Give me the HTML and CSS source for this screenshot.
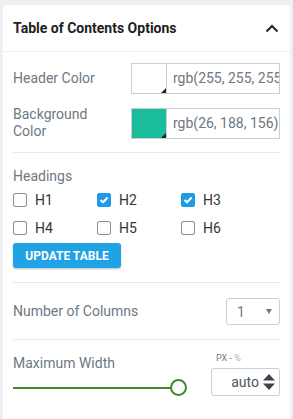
FILE: index.html
```html
<!DOCTYPE html>
<html>
<head>
<meta charset="utf-8">
<link rel="stylesheet" href="styles.css">
</head>
<body>
<div class="card">
  <div class="card-header">
    <span class="title">Table of Contents Options</span>
    <svg class="chevron" width="14" height="9" viewBox="0 0 14 9"><path d="M1.5 7.5 L7 2 L12.5 7.5" fill="none" stroke="#222" stroke-width="2"/></svg>
  </div>
  <div class="card-body">
    <div class="color-row">
      <div class="label">Header Color</div>
      <div class="color-input">
        <div class="swatch swatch-white"><span class="corner"></span></div>
        <div class="color-text"><div class="clip">rgb(255, 255, 255)</div></div>
      </div>
    </div>
    <div class="color-row">
      <div class="label">Background Color</div>
      <div class="color-input">
        <div class="swatch swatch-green"><span class="corner"></span></div>
        <div class="color-text"><div class="clip">rgb(26, 188, 156)</div></div>
      </div>
    </div>
    <hr class="divider">
    <div class="label headings-label">Headings</div>
    <div class="checks">
      <label class="check"><span class="box"></span>H1</label>
      <label class="check"><span class="box on"><svg width="10" height="8" viewBox="0 0 10 8"><path d="M1.5 4 L4 6.3 L8.6 1.5" fill="none" stroke="#fff" stroke-width="2"/></svg></span>H2</label>
      <label class="check"><span class="box on"><svg width="10" height="8" viewBox="0 0 10 8"><path d="M1.5 4 L4 6.3 L8.6 1.5" fill="none" stroke="#fff" stroke-width="2"/></svg></span>H3</label>
      <label class="check"><span class="box"></span>H4</label>
      <label class="check"><span class="box"></span>H5</label>
      <label class="check"><span class="box"></span>H6</label>
    </div>
    <button class="btn">UPDATE TABLE</button>
    <hr class="divider divider-2">
    <div class="select-row">
      <div class="label">Number of Columns</div>
      <div class="select"><span>1</span><span class="caret"></span></div>
    </div>
    <hr class="divider divider-3">
    <div class="width-row">
      <div class="width-left">
        <div class="label">Maximum Width</div>
        <div class="slider"><span class="track"></span><span class="thumb"></span></div>
      </div>
      <div class="width-right">
        <div class="units">PX <span class="dash">-</span> <span class="pct">%</span></div>
        <div class="number"><span>auto</span>
          <svg width="14" height="18" viewBox="0 0 14 18"><path d="M7 1 L13 7.5 L1 7.5 Z M7 17 L13 10.5 L1 10.5 Z" fill="#3c434a"/></svg>
        </div>
      </div>
    </div>
  </div>
</div>
</body>
</html>
```
FILE: styles.css
```css
* { box-sizing: border-box; }
html, body { margin: 0; padding: 0; }
body {
  background: #eef1f3;
  font-family: Roboto, "Liberation Sans", sans-serif;
  width: 293px;
  height: 419px;
  overflow: hidden;
}
.card {
  margin: 5px 3px 0 3px;
  background: #fff;
  border-radius: 4px 4px 0 0;
  height: 414px;
}
.card-header {
  height: 47px;
  display: flex;
  align-items: center;
  justify-content: space-between;
  padding: 0 11px 1px 10px;
  border-bottom: 1px solid #eceff1;
}
.title {
  font-size: 14px;
  font-weight: 700;
  color: #1e1e1e;
}
.chevron { margin-top: 1px; }
.card-body { padding: 11px 10px 0 10px; }
.label {
  font-size: 14px;
  color: #6d7882;
  line-height: 17px;
}
.color-row {
  display: flex;
  align-items: center;
  margin-bottom: 12px;
}
.color-row .label {
  width: 118px;
  flex-shrink: 0;
  padding-right: 22px;
}
.color-input {
  display: flex;
  flex: 1;
  min-width: 0;
  height: 31px;
}
.swatch {
  width: 36px;
  flex-shrink: 0;
  height: 31px;
  border: 1px solid #c9cfd4;
  position: relative;
}
.swatch-green { background: #1abc9c; }
.corner {
  position: absolute;
  right: 0;
  bottom: 0;
  width: 0;
  height: 0;
  border-left: 5px solid transparent;
  border-bottom: 5px solid #222;
}
.color-text {
  flex: 1;
  min-width: 0;
  border: 1px solid #c9cfd4;
  border-left: none;
  font-size: 14px;
  color: #6d7882;
  line-height: 29px;
  padding: 0 0 0 6px;
}
.clip {
  white-space: nowrap;
  overflow: hidden;
}
.divider {
  border: none;
  border-top: 1px solid #e6e9ec;
  margin: 4px 0 0 0;
  height: 0;
}
.headings-label { margin-top: 15px; }
.checks {
  display: grid;
  grid-template-columns: 84px 84px 84px;
  row-gap: 14px;
  margin-top: 8px;
}
.check {
  display: flex;
  align-items: center;
  font-size: 14px;
  color: #32373c;
  height: 14px;
}
.box {
  width: 14px;
  height: 14px;
  border: 1px solid #8c9196;
  border-radius: 2px;
  margin-right: 8px;
  display: flex;
  align-items: center;
  justify-content: center;
}
.box.on {
  background: #1e9be6;
  border-color: #1e9be6;
}
.btn {
  margin-top: 8px;
  display: block;
  width: 108px;
  height: 25px;
  border: none;
  border-radius: 3px;
  background: #20a3e4;
  color: #fff;
  font-family: Roboto, "Liberation Sans", sans-serif;
  font-weight: 700;
  font-size: 12px;
  padding: 0;
  box-shadow: 0 1px 2px rgba(0,0,0,0.25);
}
.divider-2 { margin-top: 14px; }
.select-row {
  display: flex;
  align-items: center;
  justify-content: space-between;
  padding: 15px 0 14px 0;
}
.select {
  width: 54px;
  height: 27px;
  border: 1px solid #c9cfd4;
  border-radius: 3px;
  display: flex;
  align-items: center;
  justify-content: space-between;
  padding: 0 7px 0 10px;
  font-size: 14px;
  color: #6d7882;
}
.caret {
  width: 0; height: 0;
  border-left: 3px solid transparent;
  border-right: 3px solid transparent;
  border-top: 5px solid #6d7882;
}
.divider-3 { margin-top: 0; }
.width-row {
  display: flex;
  justify-content: space-between;
  padding-top: 15px;
}
.width-left { width: 170px; }
.slider {
  position: relative;
  height: 18px;
  margin-top: 7px;
}
.track {
  position: absolute;
  left: 0;
  right: 0;
  top: 8px;
  height: 2px;
  background: #3f8a2a;
}
.thumb {
  position: absolute;
  left: 157px;
  top: 0;
  width: 17px;
  height: 17px;
  border: 2px solid #3f8a2a;
  border-radius: 50%;
  background: #fff;
}
.width-right { width: 69px; }
.units {
  font-size: 9px;
  color: #6d7882;
  padding-left: 5px;
  line-height: 11px;
  margin-top: -2px;
}
.units .pct { color: #a9b2bb; }
.number {
  margin-top: 4px;
  height: 28px;
  border: 1px solid #c9cfd4;
  border-radius: 3px;
  display: flex;
  align-items: center;
  justify-content: flex-end;
  padding-right: 3px;
  font-size: 14px;
  color: #4c545c;
}
.number span { margin-right: 3px; }
```
